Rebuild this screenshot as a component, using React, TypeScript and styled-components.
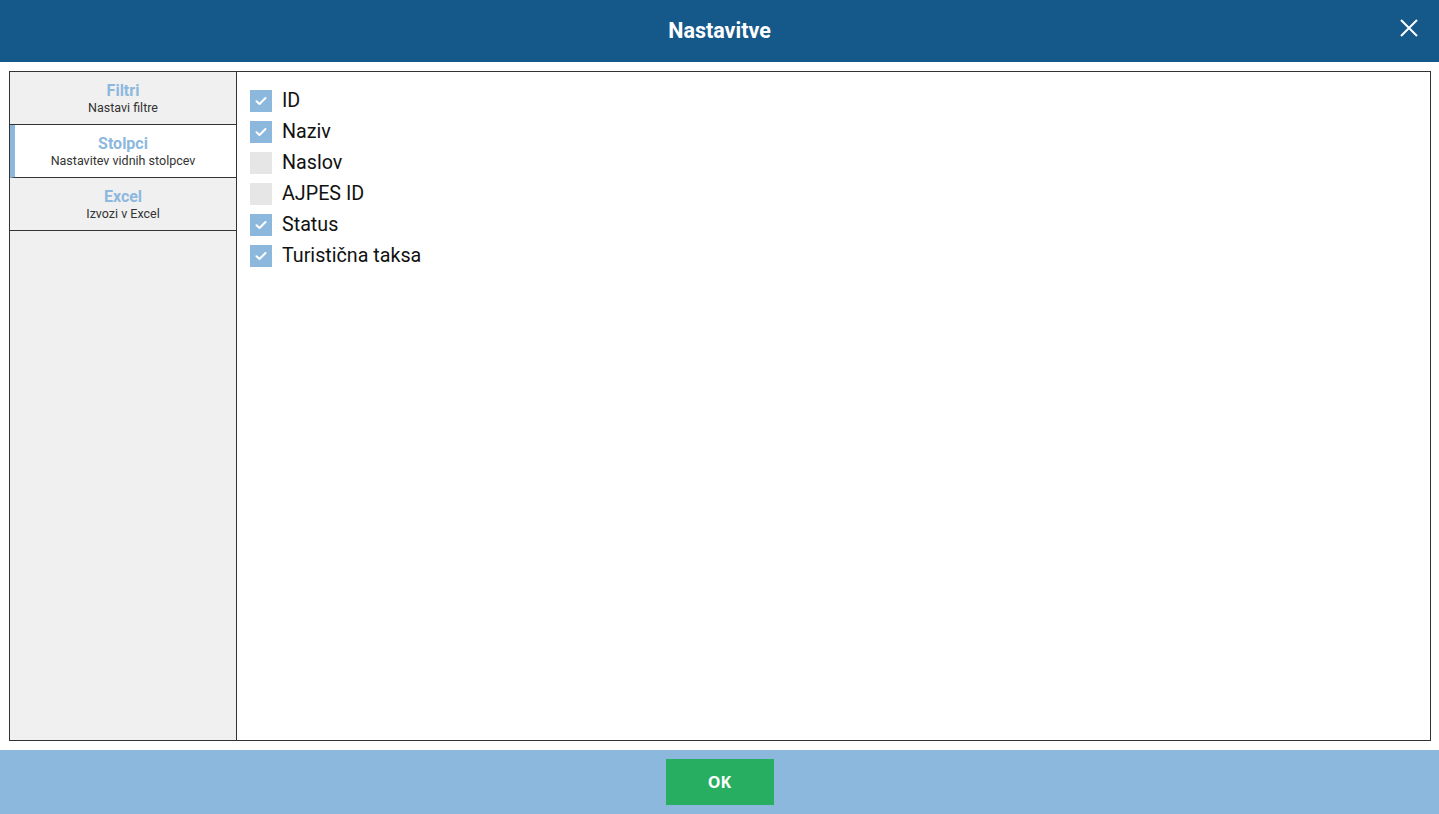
import React, { useState } from "react";
import styled, { createGlobalStyle } from "styled-components";

const Global = createGlobalStyle`
  html, body { margin: 0; padding: 0; background: #fff; }
  body { font-family: Roboto, "Noto Sans", Arial, sans-serif; }
  * { box-sizing: border-box; }
`;

const Page = styled.div`
  width: 1439px;
  height: 814px;
  display: flex;
  flex-direction: column;
  background: #fff;
`;

const Header = styled.header`
  height: 62px;
  padding-bottom: 1px;
  background: #15588a;
  display: flex;
  align-items: center;
  justify-content: center;
  position: relative;
`;

const Title = styled.h1`
  margin: 0;
  color: #fff;
  font-size: 21.5px;
  font-weight: 700;
`;

const Close = styled.button`
  position: absolute;
  right: 20px;
  top: 18px;
  width: 20px;
  height: 20px;
  padding: 0;
  border: none;
  background: transparent;
  cursor: pointer;
  display: flex;
  align-items: center;
  justify-content: center;
`;

const Body = styled.div`
  flex: 1;
  padding: 9px 8px 9px 9px;
  display: flex;
`;

const Frame = styled.div`
  flex: 1;
  border: 1px solid #333;
  display: flex;
`;

const Sidebar = styled.nav`
  width: 227px;
  background: #f0f0f0;
  border-right: 1px solid #333;
  display: flex;
  flex-direction: column;
`;

const Tab = styled.div<{ $active?: boolean }>`
  height: 53px;
  padding-top: 1px;
  border-bottom: 1px solid #333;
  background: ${(p) => (p.$active ? "#fff" : "#f0f0f0")};
  border-left: ${(p) => (p.$active ? "5px solid #8db8de" : "none")};
  padding-right: ${(p) => (p.$active ? "5px" : "0")};
  display: flex;
  flex-direction: column;
  align-items: center;
  justify-content: center;
  cursor: pointer;
`;

const TabTitle = styled.div`
  color: #8db8de;
  font-weight: 700;
  font-size: 16px;
  line-height: 18px;
`;

const TabSub = styled.div`
  color: #333;
  font-size: 12.5px;
  line-height: 16px;
`;

const Content = styled.div`
  flex: 1;
  padding: 13px 13px 12px;
  display: flex;
  flex-direction: column;
`;

const Row = styled.label`
  height: 31px;
  display: flex;
  align-items: center;
  gap: 10px;
  cursor: pointer;
`;

const Box = styled.span<{ $checked: boolean }>`
  width: 22px;
  height: 22px;
  background: ${(p) => (p.$checked ? "#8db8de" : "#e6e6e6")};
  display: flex;
  align-items: center;
  justify-content: center;
`;

const Label = styled.span`
  font-size: 19.7px;
  color: #111;
`;

const Footer = styled.footer`
  height: 64px;
  background: #8db8de;
  display: flex;
  align-items: center;
  justify-content: center;
`;

const OkButton = styled.button`
  width: 108px;
  height: 46px;
  background: #27ae60;
  border: none;
  color: #fff;
  font-family: "Open Sans", Roboto, sans-serif;
  font-weight: 700;
  font-size: 16px;
  cursor: pointer;
`;

const Check = () => (
  <svg width="12" height="10" viewBox="0 0 12 10" fill="none">
    <path d="M1.5 5.2 L4.5 8 L10.5 2" stroke="#fff" strokeWidth="2" strokeLinecap="round" strokeLinejoin="round" />
  </svg>
);

const tabs = [
  { title: "Filtri", sub: "Nastavi filtre" },
  { title: "Stolpci", sub: "Nastavitev vidnih stolpcev" },
  { title: "Excel", sub: "Izvozi v Excel" },
];

const initial = [
  { name: "ID", on: true },
  { name: "Naziv", on: true },
  { name: "Naslov", on: false },
  { name: "AJPES ID", on: false },
  { name: "Status", on: true },
  { name: "Turistična taksa", on: true },
];

export default function App() {
  const [active, setActive] = useState(1);
  const [cols, setCols] = useState(initial);
  return (
    <Page>
      <Global />
      <Header>
        <Title>Nastavitve</Title>
        <Close aria-label="close">
          <svg width="18" height="18" viewBox="0 0 18 18">
            <path d="M1 1 L17 17 M17 1 L1 17" stroke="#fff" strokeWidth="2" />
          </svg>
        </Close>
      </Header>
      <Body>
        <Frame>
          <Sidebar>
            {tabs.map((t, i) => (
              <Tab key={t.title} $active={i === active} onClick={() => setActive(i)}>
                <TabTitle>{t.title}</TabTitle>
                <TabSub>{t.sub}</TabSub>
              </Tab>
            ))}
          </Sidebar>
          <Content>
            {cols.map((c, i) => (
              <Row
                key={c.name}
                onClick={() =>
                  setCols(cols.map((x, j) => (j === i ? { ...x, on: !x.on } : x)))
                }
              >
                <Box $checked={c.on}>{c.on && <Check />}</Box>
                <Label>{c.name}</Label>
              </Row>
            ))}
          </Content>
        </Frame>
      </Body>
      <Footer>
        <OkButton>OK</OkButton>
      </Footer>
    </Page>
  );
}
